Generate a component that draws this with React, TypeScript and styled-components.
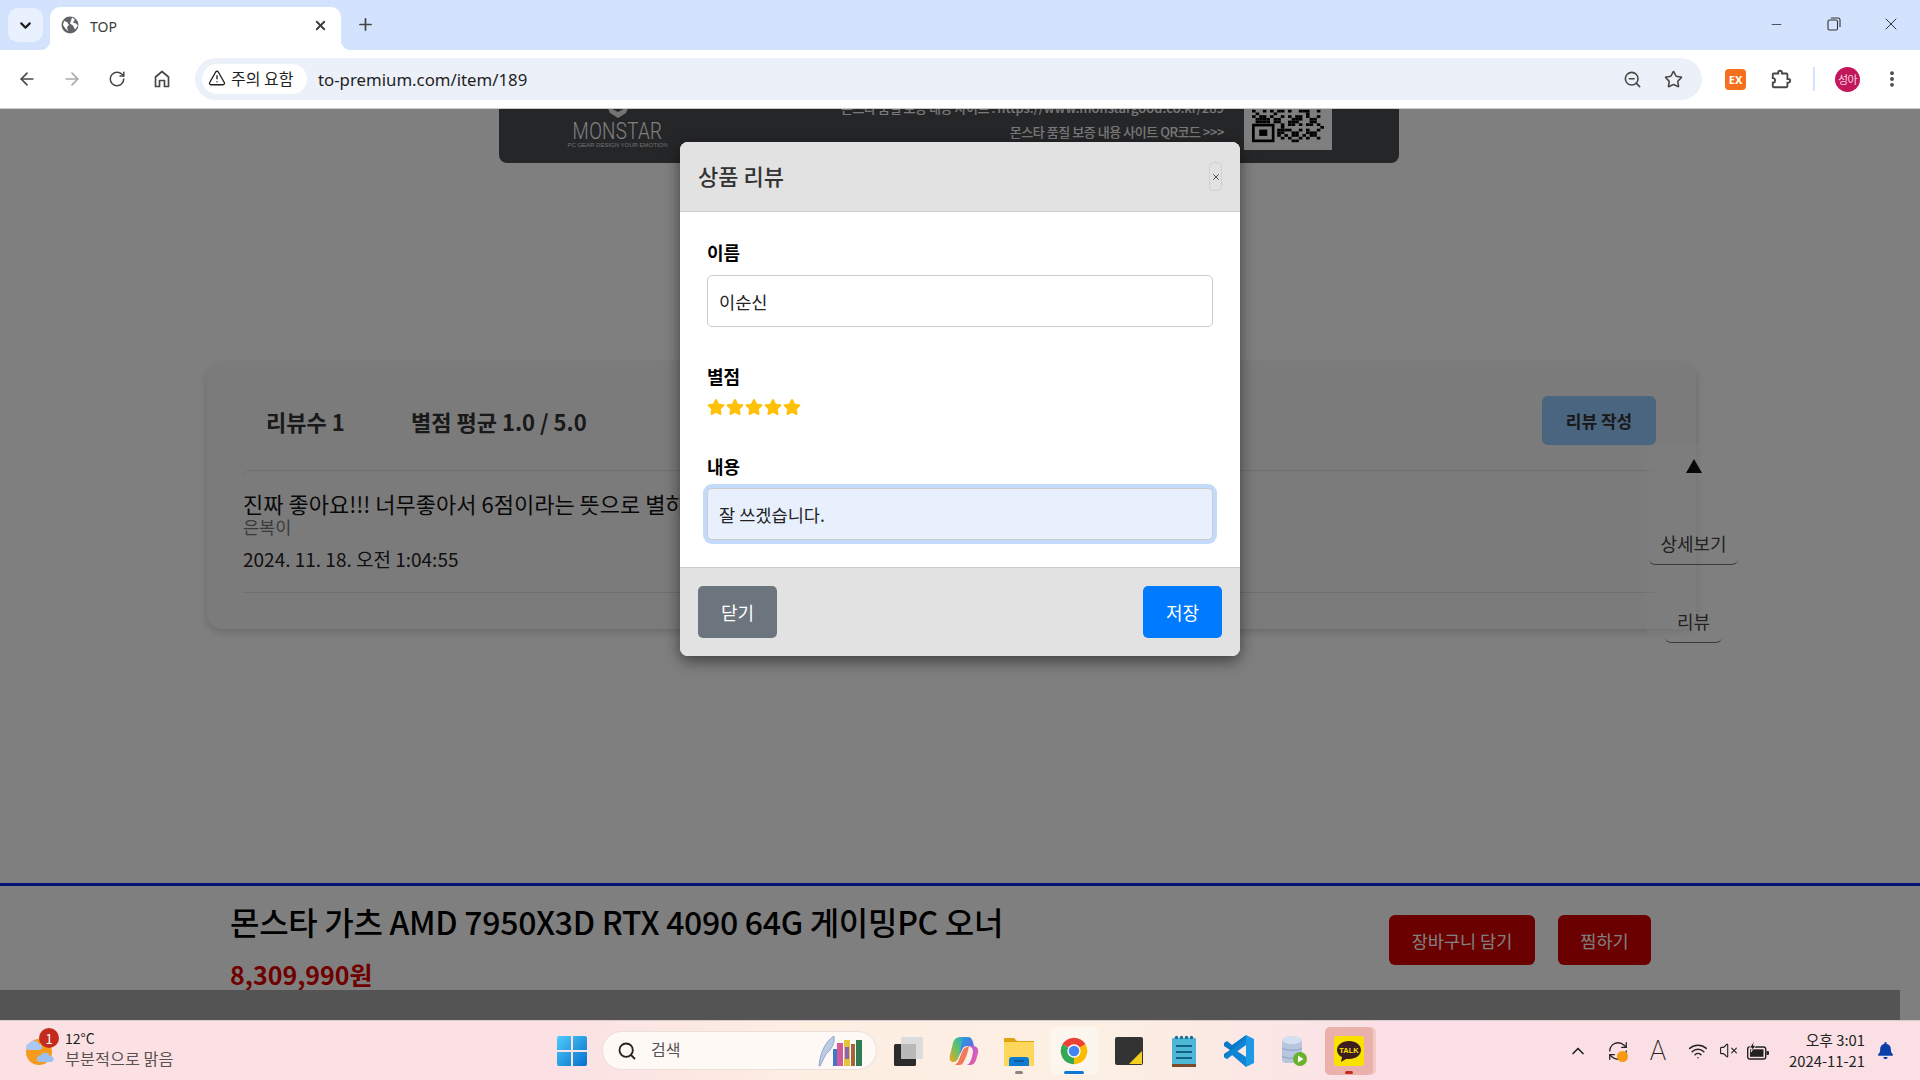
import React from 'react'
import styled, { createGlobalStyle } from 'styled-components'
import {
  ArrowLeft, ArrowRight, ChevronDown, ChevronUp, EllipsisVertical, Minus, Plus,
  RotateCw, Search, Star, TriangleAlert, VolumeX, Wifi, X, ZoomOut, RefreshCw,
} from 'lucide-react'
import { FaStar, FaBell } from 'react-icons/fa'

const GlobalStyle = createGlobalStyle`
  html, body {
    margin: 0;
    height: 1080px;
    overflow: hidden;
    background: #fff;
    font-family: "Noto Sans CJK KR", "Noto Sans", sans-serif;
    color: #212529;
  }
  * { box-sizing: border-box; }
`

const Screen = styled.div`
  width: 1920px;
  height: 1080px;
  display: flex;
  flex-direction: column;
`

/* browser chrome */
const TabStrip = styled.div`
  height: 50px;
  flex: none;
  background: #d3e3fd;
  display: flex;
  align-items: flex-end;
  padding-left: 8px;
`
const TabMenu = styled.div`
  width: 35px;
  height: 34px;
  margin-bottom: 8px;
  margin-right: 7px;
  border-radius: 10px;
  background: #eaf1fe;
  display: flex;
  align-items: center;
  justify-content: center;
  color: #1f1f1f;
`
const Tab = styled.div`
  position: relative;
  width: 291px;
  height: 43px;
  background: #fff;
  border-radius: 10px 10px 0 0;
  display: flex;
  align-items: center;
  padding: 0 13px 7px 11px;
  font-size: 14px;
  color: #3c3c3c;
  &::before, &::after {
    content: '';
    position: absolute;
    bottom: 0;
    width: 10px;
    height: 10px;
  }
  &::before { left: -10px; background: radial-gradient(circle at 0 0, #d3e3fd 10px, #fff 10.5px); }
  &::after { right: -10px; background: radial-gradient(circle at 100% 0, #d3e3fd 10px, #fff 10.5px); }
`
const TabTitle = styled.span`
  flex: 1;
  margin-left: 11px;
  font-family: "Noto Sans", sans-serif;
  font-size: 14px;
  padding-top: 3px;
`
const NewTab = styled.div`
  margin: 0 0 9px 15px;
  height: 34px;
  display: flex;
  align-items: center;
  color: #444;
`
const WindowButtons = styled.div`
  margin-left: auto;
  display: flex;
  align-self: flex-start;
  padding-right: 1px;
`
const WindowButton = styled.div`
  width: 57px;
  height: 48px;
  display: flex;
  align-items: center;
  justify-content: center;
  color: #222;
`
const Toolbar = styled.div`
  height: 59px;
  flex: none;
  background: #fff;
  border-radius: 9px 9px 0 0;
  border-bottom: 1px solid #c9c9c9;
  display: flex;
  align-items: center;
`
const NavButtons = styled.div`
  width: 195px;
  flex: none;
  display: flex;
  padding-left: 5px;
  gap: 1px;
`
const NavButton = styled.div<{ $off?: boolean }>`
  width: 44px;
  height: 32px;
  display: flex;
  align-items: center;
  justify-content: center;
  color: ${p => (p.$off ? '#a9a9a9' : '#474747')};
`
const AddressBar = styled.div`
  width: 1507px;
  height: 42px;
  border-radius: 21px;
  background: #ebf0f9;
  display: flex;
  align-items: center;
  padding: 0 19px 0 7px;
`
const SecurityChip = styled.div`
  width: 105px;
  height: 30px;
  flex: none;
  border-radius: 15px;
  background: #fff;
  display: flex;
  align-items: center;
  gap: 5px;
  padding: 0 0 2px 6px;
  font-size: 16px;
  line-height: 26px;
  white-space: nowrap;
  color: #1f1f1f;
`
const UrlText = styled.span`
  margin-left: 11px;
  flex: 1;
  font-family: "Noto Sans", sans-serif;
  font-size: 16.8px;
  color: #1f1f1f;
`
const AddressIcons = styled.div`
  display: flex;
  gap: 22px;
  color: #474747;
  align-items: center;
`
const ToolIcons = styled.div`
  display: flex;
  align-items: center;
  flex: 1;
  padding-left: 23px;
  color: #474747;
`
const ExBadge = styled.div`
  width: 21px;
  height: 21px;
  border-radius: 4px;
  background: #f5701d;
  color: #fff;
  font-size: 11px;
  font-weight: 700;
  font-family: "Noto Sans", sans-serif;
  display: flex;
  align-items: center;
  justify-content: center;
`
const PuzzleSlot = styled.div`
  margin-left: 24px;
  width: 22px;
  display: flex;
`
const ToolDivider = styled.div`
  width: 2px;
  height: 24px;
  background: #d3e3fd;
  margin-left: 21px;
`
const Avatar = styled.div`
  width: 25px;
  height: 25px;
  margin-left: 20px;
  border-radius: 50%;
  background: #c2185b;
  color: #f7d5e3;
  font-size: 11px;
  letter-spacing: -0.5px;
  display: flex;
  align-items: center;
  justify-content: center;
`
const DotsSlot = styled.div`
  margin-left: 22px;
  display: flex;
  color: #474747;
`

/* page */
const Page = styled.div`
  position: relative;
  flex: 1;
  min-height: 0;
  overflow: hidden;
  display: flex;
  flex-direction: column;
  background: #fff;
`
const Banner = styled.div`
  width: 900px;
  height: 54px;
  flex: none;
  margin-left: 499px;
  background: #4a4c50;
  border-radius: 0 0 8px 8px;
  overflow: hidden;
  display: flex;
  align-items: flex-end;
  padding: 0 67px 13px 72px;
  color: #fff;
`
const BannerLogo = styled.div`
  display: flex;
  flex-direction: column;
  align-items: center;
  width: 93px;
`
const LogoMark = styled.svg`
  display: block;
  margin-bottom: 3px;
`
const LogoName = styled.div`
  font-family: Roboto, "Liberation Sans", sans-serif;
  font-weight: 300;
  font-size: 24px;
  line-height: 20px;
  letter-spacing: 0.4px;
  transform: scaleX(0.78);
  white-space: nowrap;
`
const LogoTag = styled.div`
  font-size: 6px;
  line-height: 9px;
  white-space: nowrap;
  font-family: "Liberation Sans", sans-serif;
  color: #ddd;
`
const BannerCopy = styled.div`
  margin-left: auto;
  margin-right: 20px;
  margin-bottom: 6px;
  text-align: right;
  font-size: 13px;
  font-weight: 500;
  line-height: 24px;
  white-space: nowrap;
  letter-spacing: -0.45px;
  color: #f2f2f2;
`
const BannerUrl = styled.span`
  letter-spacing: 0;
`
const QrBox = styled.div`
  width: 88px;
  height: 46px;
  flex: none;
  background: #fff;
  display: flex;
  align-items: flex-end;
  justify-content: center;
  padding-bottom: 6px;
`
const ReviewCard = styled.section`
  margin: 200px 0 0 207px;
  width: 1489px;
  height: 266px;
  flex: none;
  border-radius: 15px;
  background: #f6f6f6;
  box-shadow: 0 3px 10px rgba(0, 0, 0, 0.18);
  padding: 33px 40px 0 36px;
`
const ReviewHead = styled.div`
  display: flex;
  align-items: center;
  height: 49px;
  padding-left: 23px;
  margin-bottom: 25px;
`
const ReviewStat = styled.div<{ $w: number }>`
  width: ${p => p.$w}px;
  font-size: 22px;
  font-weight: 700;
  color: #333;
`
const WriteButton = styled.button`
  margin-left: auto;
  width: 114px;
  height: 49px;
  border: none;
  border-radius: 6px;
  background: #94cafe;
  color: #333;
  font: 700 17px "Noto Sans CJK KR", sans-serif;
`
const ReviewRow = styled.article`
  height: 123px;
  border-top: 1px solid #dedede;
  border-bottom: 1px solid #dedede;
  border-radius: 8px 8px 0 0;
  padding-top: 18px;
`
const ReviewText = styled.div`
  font-size: 22px;
  line-height: 28px;
  color: #111;
  white-space: nowrap;
`
const ReviewAuthor = styled.div`
  font-size: 17.5px;
  line-height: 20px;
  color: #777;
`
const ReviewDate = styled.div`
  margin-top: 9px;
  font-size: 19px;
  line-height: 26px;
  color: #222;
`
const SideNav = styled.nav`
  position: absolute;
  left: 1647px;
  top: 336px;
  width: 93px;
  height: 220px;
  background: rgba(255, 255, 255, 0.45);
  display: flex;
  flex-direction: column;
  align-items: center;
  font-size: 18px;
  color: #444;
`
const SideArrow = styled.div`
  margin: 14px 0 0;
  width: 0;
  height: 0;
  border-left: 8px solid transparent;
  border-right: 8px solid transparent;
  border-bottom: 14px solid #111;
`
const SideLink = styled.div<{ $w: number; $top: number }>`
  width: ${p => p.$w}px;
  margin-top: ${p => p.$top}px;
  padding-bottom: 7px;
  line-height: 28px;
  text-align: center;
  border-bottom: 1px solid #777;
  border-radius: 0 0 6px 6px;
`
const BuyBar = styled.div`
  margin-top: auto;
  height: 107px;
  flex: none;
  border-top: 3px solid #0a28f0;
  background: #fff;
  display: flex;
  padding: 0 269px 0 230px;
`
const BuyInfo = styled.div`
  flex: 1;
  padding-top: 13px;
`
const BuyTitle = styled.div`
  font-size: 32px;
  line-height: 44px;
  font-weight: 500;
  letter-spacing: -0.3px;
  color: #000;
`
const BuyPrice = styled.div`
  margin-top: 16px;
  font-size: 25px;
  line-height: 30px;
  font-weight: 700;
  color: #e00000;
`
const BuyActions = styled.div`
  display: flex;
  gap: 23px;
  padding-top: 29px;
`
const BuyButton = styled.button<{ $w: number }>`
  width: ${p => p.$w}px;
  height: 50px;
  border: none;
  border-radius: 6px;
  background: #d60000;
  color: #fff;
  font: 400 17.5px "Noto Sans CJK KR", sans-serif;
`
const BottomStrip = styled.div`
  height: 30px;
  flex: none;
  margin-right: 20px;
  background: #a8a8a8;
`

/* modal */
const Backdrop = styled.div`
  position: absolute;
  inset: 0;
  background: rgba(0, 0, 0, 0.5);
  display: flex;
  justify-content: center;
  align-items: flex-start;
  padding-top: 33px;
`
const Modal = styled.div`
  width: 560px;
  height: 514px;
  border-radius: 8px;
  overflow: hidden;
  background: #fff;
  box-shadow: 0 5px 15px rgba(0, 0, 0, 0.5);
  display: flex;
  flex-direction: column;
`
const ModalHead = styled.header`
  height: 70px;
  flex: none;
  background: #e2e2e2;
  border-bottom: 1px solid #ccc;
  display: flex;
  align-items: center;
  justify-content: space-between;
  padding: 0 18px;
`
const ModalTitle = styled.h2`
  margin: -4px 0 0;
  font-size: 22px;
  font-weight: 500;
  color: #333;
`
const CloseButton = styled.button`
  width: 13px;
  height: 29px;
  padding: 0;
  background: transparent;
  border: 1px solid #d0d0d0;
  border-radius: 5px;
  display: flex;
  align-items: center;
  justify-content: center;
  color: #333;
`
const ModalBody = styled.div`
  flex: 1;
  padding: 26px 27px 0;
`
const Field = styled.div<{ $gap: number }>`
  margin-bottom: ${p => p.$gap}px;
`
const FieldLabel = styled.label`
  display: block;
  font-size: 18px;
  font-weight: 700;
  line-height: 28px;
  color: #000;
  margin-bottom: 9px;
`
const StarLabel = styled(FieldLabel)`
  margin-bottom: 6px;
`
const FieldInput = styled.input<{ $focused?: boolean }>`
  display: block;
  width: 506px;
  height: 52px;
  margin-top: ${p => (p.$focused ? '-1px' : '0')};
  padding: 0 11px;
  border: 1px solid #ccc;
  border-radius: 5px;
  outline: none;
  font: 400 17.6px "Noto Sans CJK KR", sans-serif;
  color: #222;
  background: ${p => (p.$focused ? '#e8f0fe' : '#fff')};
  box-shadow: ${p => (p.$focused ? '0 0 0 4px #c4dafa' : 'none')};
`
const StarRow = styled.div`
  display: flex;
  gap: 1px;
  color: #ffc107;
  height: 22px;
  align-items: center;
`
const ModalFoot = styled.footer`
  height: 89px;
  flex: none;
  background: #e2e2e2;
  border-top: 1px solid #ccc;
  display: flex;
  justify-content: space-between;
  padding: 18px 18px 0;
`
const ModalButton = styled.button<{ $tone: string }>`
  width: 79px;
  height: 52px;
  border: none;
  border-radius: 5px;
  background: ${p => p.$tone};
  color: #fff;
  font: 400 18px "Noto Sans CJK KR", sans-serif;
`

/* taskbar */
const Taskbar = styled.footer`
  height: 60px;
  flex: none;
  border-top: 1px solid #d9cccc;
  background: linear-gradient(90deg, #fbe0e4 0%, #fbe0e4 28%, #fdeee2 42%, #fcefe3 58%, #fae0e6 72%, #fae0e4 100%);
  display: flex;
  align-items: center;
  z-index: 2;
`
const Weather = styled.div`
  width: 557px;
  flex: none;
  display: flex;
  align-items: center;
  padding-left: 24px;
`
const WeatherIcon = styled.div`
  position: relative;
  width: 34px;
  height: 40px;
  margin-top: -3px;
  display: flex;
  align-items: center;
`
const WeatherBadge = styled.span`
  position: absolute;
  top: -1px;
  left: 15px;
  width: 20px;
  height: 20px;
  border-radius: 50%;
  background: #c42b1c;
  color: #fff;
  font-size: 13px;
  display: flex;
  align-items: center;
  justify-content: center;
`
const WeatherText = styled.div`
  margin: -5px 0 0 7px;
  font-size: 14px;
  line-height: 20px;
  color: #1c1c1c;
`
const WeatherSub = styled.div`
  font-size: 16.3px;
  color: #5a5252;
`
const StartLogo = styled.div`
  width: 31px;
  display: flex;
  margin-right: 14px;
`
const SearchBox = styled.div`
  width: 275px;
  height: 39px;
  flex: none;
  border-radius: 20px;
  background: #fff9f6;
  border: 1px solid #eadfda;
  display: flex;
  align-items: center;
  padding: 0 12px 0 14px;
  font-size: 16px;
  color: #555;
  margin-right: 4px;
`
const SearchHint = styled.span`
  margin: -3px 0 0 14px;
  flex: 1;
`
const TaskButton = styled.div<{ $state?: 'open' | 'active' | 'alert' }>`
  position: relative;
  width: 48px;
  height: 48px;
  margin: 0 3.5px;
  flex: none;
  border-radius: 5px;
  display: flex;
  align-items: center;
  justify-content: center;
  background: ${p => (p.$state === 'active' ? '#fdf6ef' : p.$state === 'alert' ? '#eab0ab' : 'transparent')};
  box-shadow: ${p => (p.$state === 'alert' ? '3px 0 0 #f3c9c5' : 'none')};
  &::after {
    content: '';
    display: ${p => (p.$state ? 'block' : 'none')};
    position: absolute;
    bottom: 1px;
    left: 50%;
    height: 3px;
    border-radius: 2px;
    transform: translateX(-50%);
    width: ${p => (p.$state === 'active' ? '20px' : '8px')};
    background: ${p => (p.$state === 'active' ? '#0a78d4' : p.$state === 'alert' ? '#c42b1c' : '#8a8580')};
  }
`
const Tray = styled.div`
  margin-left: auto;
  display: flex;
  align-items: center;
  padding-right: 25px;
  color: #222;
`
const TrayItem = styled.div<{ $w: number; $after?: number }>`
  position: relative;
  width: ${p => p.$w}px;
  margin-right: ${p => p.$after ?? 0}px;
  display: flex;
  justify-content: center;
  align-items: center;
`
const TrayLetter = styled.span`
  font-family: Roboto, "Liberation Sans", sans-serif;
  font-size: 27px;
  font-weight: 200;
  color: #222;
`
const SyncDot = styled.span`
  position: absolute;
  right: 10px;
  bottom: 0;
  width: 11px;
  height: 11px;
  border-radius: 50%;
  background: #f79a0f;
`
const Clock = styled.div`
  width: 82px;
  margin: -2px 0 0 10px;
  text-align: right;
  font-size: 14.8px;
  line-height: 21px;
  white-space: nowrap;
`
const BellSlot = styled.div`
  width: 20px;
  margin-left: 10px;
  display: flex;
  justify-content: center;
  color: #0b3fa8;
`

function Globe() {
  return (
    <svg width="18" height="18" viewBox="0 0 18 18">
      <circle cx="9" cy="9" r="8.5" fill="#5f6368" />
      <path d="M3 5l3 1 2 3-2 2 1 4-3-3-2-3zM11 1.500l3 2-2 3 3 1 2 2-3 4-2-4-3-2 1-3z" fill="#fff" />
    </svg>
  )
}

function HomeIcon() {
  return (
    <svg width="20" height="20" viewBox="0 0 20 20" fill="none" stroke="#474747" strokeWidth="1.700" strokeLinejoin="round">
      <path d="M3.500 17.500V8L10 2.500 16.500 8v9.500h-4v-6h-5v6z" />
    </svg>
  )
}

function PuzzleIcon() {
  return (
    <svg width="22" height="22" viewBox="0 0 24 24" fill="none" stroke="#474747" strokeWidth="2">
      <path d="M4 6h5V5a2 2 0 0 1 4 0v1h5a1 1 0 0 1 1 1v5h1a2 2 0 0 1 0 4h-1v4a1 1 0 0 1-1 1H4a1 1 0 0 1-1-1v-4a2.500 2.500 0 0 0 0-5V7a1 1 0 0 1 1-1z" />
    </svg>
  )
}

function BatteryIcon() {
  return (
    <svg width="24" height="20" viewBox="0 0 24 20">
      <rect x="1.700" y="6" width="18" height="12" rx="2" fill="none" stroke="#222" strokeWidth="1.400" />
      <rect x="4" y="8.300" width="13.500" height="7.500" fill="#222" />
      <rect x="20.500" y="10" width="2.500" height="4" rx="1" fill="#222" />
      <path d="M8 0L3.500 7h2.500l-1 4 5-6.500H7.500z" fill="#222" stroke="#fbe0e4" strokeWidth="0.800" />
    </svg>
  )
}

function QrCode() {
  const cells: React.ReactNode[] = []
  const size = 20
  for (let y = 0; y < 12; y++) {
    for (let x = 0; x < size; x++) {
      const inFinder = x < 7 && y > 4
      if (!inFinder && ((x * 7 + y * 13 + x * y * 3) % 5 < 2 || (x ^ y) % 7 === 0)) {
        cells.push(<rect key={`${x}-${y}`} x={x * 4} y={y * 3} width="4" height="3" fill="#000" />)
      }
    }
  }
  return (
    <svg width="72" height="36" viewBox="0 0 80 36">
      {cells}
      <rect x="1.500" y="17" width="22" height="17.500" fill="none" stroke="#000" strokeWidth="3" />
      <rect x="8" y="22" width="9" height="7" fill="#000" />
    </svg>
  )
}

function WeatherArt() {
  return (
    <svg width="34" height="36" viewBox="0 0 34 36">
      <circle cx="15" cy="21" r="13" fill="#f59a1c" />
      <path d="M2 17a4 4 0 0 1 4-5 5 5 0 0 1 9 1 3 3 0 0 1 0 6H4a2 2 0 0 1-2-2z" fill="#a9c8f5" />
      <path d="M13 29a4 4 0 0 1 4-5 5 5 0 0 1 9 1 3 3 0 0 1 1 6H15a2 2 0 0 1-2-2z" fill="#9cc0f2" />
    </svg>
  )
}

function WindowsLogo() {
  return (
    <svg width="30" height="30" viewBox="0 0 30 30">
      <defs>
        <linearGradient id="win" x1="0" y1="0" x2="1" y2="1">
          <stop offset="0" stopColor="#4fcbfb" />
          <stop offset="1" stopColor="#0570cc" />
        </linearGradient>
      </defs>
      <path d="M0 2a2 2 0 0 1 2-2h12v14H0zM16 0h12a2 2 0 0 1 2 2v12H16zM0 16h14v14H2a2 2 0 0 1-2-2zM16 16h14v12a2 2 0 0 1-2 2H16z" fill="url(#win)" />
    </svg>
  )
}

function BooksArt() {
  return (
    <svg width="46" height="32" viewBox="0 0 46 32">
      <path d="M1 31C2 17 8 6 16 1c1 7-2 13-8 18-2 4-4 8-6 12z" fill="#b8cde6" stroke="#7d8cb8" strokeWidth="0.7" />
      <rect x="15" y="14" width="4" height="17" fill="#3f78c6" />
      <rect x="19" y="8" width="6" height="23" fill="#d05a9c" />
      <rect x="26" y="5" width="6" height="26" fill="#e4c43a" />
      <rect x="27" y="12" width="4" height="12" fill="#8b63c8" />
      <rect x="33" y="9" width="4" height="22" fill="#a6643a" />
      <rect x="38" y="5" width="6" height="26" fill="#2e7d55" />
    </svg>
  )
}

function TaskViewArt() {
  return (
    <svg width="30" height="30" viewBox="0 0 30 30">
      <rect x="0" y="8" width="22" height="22" rx="1.500" fill="#2b2b2b" />
      <rect x="7" y="1" width="22" height="22" rx="1.500" fill="#dcdcdc" />
      <rect x="7" y="8" width="15" height="15" fill="#b9b9b9" />
    </svg>
  )
}

function CopilotArt() {
  return (
    <svg width="32" height="32" viewBox="0 0 32 32">
      <defs>
        <linearGradient id="cpa" x1="0" y1="0" x2="1" y2="1">
          <stop offset="0" stopColor="#1fa5e0" />
          <stop offset="1" stopColor="#6a5be0" />
        </linearGradient>
        <linearGradient id="cpb" x1="0" y1="0" x2="1" y2="1">
          <stop offset="0" stopColor="#a95be8" />
          <stop offset="1" stopColor="#f0609a" />
        </linearGradient>
        <linearGradient id="cpc" x1="0" y1="1" x2="1" y2="0">
          <stop offset="0" stopColor="#f6a21c" />
          <stop offset="0.5" stopColor="#5fc46a" />
          <stop offset="1" stopColor="#1fa5e0" />
        </linearGradient>
      </defs>
      <path d="M13 2h5c-2 1-3 3-4 7l-3 12c-1 4-3 6-6 6-3 0-4-3-3-7l3-12c1-4 4-6 8-6z" fill="url(#cpc)" />
      <path d="M13 2h7c3 0 4 2 5 5l1 4h-7c-2 0-4 1-5 4l-3 6 2-10c1-5 1-8 0-9z" fill="url(#cpa)" />
      <path d="M21 11h4c4 0 6 3 5 7l-2 7c-1 3-3 5-6 5h-3c2-1 4-4 5-8l1-5c0-3-1-5-4-6z" fill="url(#cpb)" />
      <path d="M10 27l4-10c1-3 3-5 7-6-1 6-3 12-6 17-1 2-3 2-5 2h-3c1-1 2-2 3-3z" fill="#f26b4b" opacity="0.9" />
    </svg>
  )
}

function FolderArt() {
  return (
    <svg width="32" height="32" viewBox="0 0 32 32">
      <path d="M1 3h10l3 3h17v8H1z" fill="#dea30e" />
      <rect x="1" y="7" width="30" height="24" fill="#fbd75b" />
      <path d="M6 31v-6a3 3 0 0 1 3-3h14a3 3 0 0 1 3 3v6z" fill="#0f7ad1" />
      <rect x="11" y="25" width="10" height="2" fill="#0b5aa0" />
    </svg>
  )
}

function ChromeArt() {
  return (
    <svg width="32" height="32" viewBox="0 0 48 48">
      <path d="M24 24L6.680 14A20 20 0 0 1 41.320 14z" fill="#ea4335" />
      <path d="M24 24L24 44A20 20 0 0 1 6.680 14z" fill="#34a853" />
      <path d="M24 24L41.320 14A20 20 0 0 1 24 44z" fill="#fbbc04" />
      <circle cx="24" cy="24" r="10" fill="#fff" />
      <circle cx="24" cy="24" r="8" fill="#4285f4" />
    </svg>
  )
}

function StickyArt() {
  return (
    <svg width="28" height="28" viewBox="0 0 28 28">
      <rect width="28" height="28" rx="2" fill="#333" />
      <path d="M14 27L27 14v13z" fill="#f6cf1d" />
    </svg>
  )
}

function NotepadArt() {
  return (
    <svg width="24" height="32" viewBox="0 0 24 32">
      <rect y="3" width="24" height="28" rx="1" fill="#4fb6d8" />
      <rect y="29" width="24" height="3" fill="#7a4a2a" />
      {[3, 8, 13, 18].map(x => <circle key={x} cx={x + 1.5} cy="2.500" r="1.700" fill="#1b6f90" />)}
      {[10, 16, 22].map(y => <rect key={y} x="4" y={y} width="16" height="2" fill="#0f6484" />)}
    </svg>
  )
}

function VsCodeArt() {
  return (
    <svg width="32" height="34" viewBox="0 0 32 34">
      <path d="M23 1L31 5v24l-8 4z" fill="#1c9ae6" />
      <path d="M23 1v9L9 21l-5 4-3-2v-3l6-4-6-4v-3l3-2 5 4z" fill="#0a78c8" />
      <path d="M4 25l-3-2 22-20v8L9 21zM23 23v10L9 21l5-4z" fill="#0f84d4" />
    </svg>
  )
}

function DiskArt() {
  return (
    <svg width="28" height="32" viewBox="0 0 28 32">
      <rect x="2" y="3" width="20" height="25" rx="4" fill="#b7c5de" />
      <ellipse cx="12" cy="5" rx="10" ry="4" fill="#d6dfef" />
      <path d="M2 13c3 3 17 3 20 0M2 21c3 3 17 3 20 0" stroke="#8da0c4" fill="none" />
      <circle cx="20" cy="24" r="7" fill="#68b32e" />
      <path d="M18 20.500l5.500 3.500-5.500 3.500z" fill="#fff" />
    </svg>
  )
}

function KakaoArt() {
  return (
    <svg width="30" height="30" viewBox="0 0 30 30">
      <rect width="30" height="30" rx="3" fill="#fae100" />
      <path d="M15 5c-7 0-12 4-12 9 0 3 2 6 5 7l-1 5 5-3h3c7 0 12-4 12-9s-5-9-12-9z" fill="#3c1e1e" />
      <text x="15" y="17" textAnchor="middle" fontFamily="Liberation Sans, sans-serif" fontSize="7.500" fontWeight="700" fill="#fae100">TALK</text>
    </svg>
  )
}

export default function App() {
  return (
    <Screen>
      <GlobalStyle />
      <TabStrip>
        <TabMenu><ChevronDown size={17} strokeWidth={3} /></TabMenu>
        <Tab>
          <Globe />
          <TabTitle>TOP</TabTitle>
          <X size={15} strokeWidth={3} />
        </Tab>
        <NewTab><Plus size={19} strokeWidth={2.2} /></NewTab>
        <WindowButtons>
          <WindowButton><Minus size={15} strokeWidth={1.2} /></WindowButton>
          <WindowButton>
            <svg width="14" height="14" viewBox="0 0 14 14" fill="none" stroke="#333" strokeWidth="1.1">
              <rect x="1" y="3" width="9.500" height="10" rx="1.500" />
              <path d="M4 1h7a2 2 0 0 1 2 2v7" />
            </svg>
          </WindowButton>
          <WindowButton><X size={20} strokeWidth={1.1} /></WindowButton>
        </WindowButtons>
      </TabStrip>

      <Toolbar>
        <NavButtons>
          <NavButton><ArrowLeft size={20} /></NavButton>
          <NavButton $off><ArrowRight size={20} /></NavButton>
          <NavButton><RotateCw size={18} /></NavButton>
          <NavButton><HomeIcon /></NavButton>
        </NavButtons>
        <AddressBar>
          <SecurityChip>
            <TriangleAlert size={18} strokeWidth={1.8} />
            주의 요함
          </SecurityChip>
          <UrlText>to-premium.com/item/189</UrlText>
          <AddressIcons>
            <ZoomOut size={19} />
            <Star size={19} />
          </AddressIcons>
        </AddressBar>
        <ToolIcons>
          <ExBadge>EX</ExBadge>
          <PuzzleSlot><PuzzleIcon /></PuzzleSlot>
          <ToolDivider />
          <Avatar>성아</Avatar>
          <DotsSlot><EllipsisVertical size={20} strokeWidth={2.6} /></DotsSlot>
        </ToolIcons>
      </Toolbar>

      <Page>
        <Banner>
          <BannerLogo>
            <LogoMark width="30" height="14" viewBox="0 0 30 14">
              <path d="M4 2l11 6 11-6-3 7-8 5-8-5z" fill="#e8e8e8" />
            </LogoMark>
            <LogoName>MONSTAR</LogoName>
            <LogoTag>PC GEAR DESIGN YOUR EMOTION</LogoTag>
          </BannerLogo>
          <BannerCopy>
            몬스타 품질 보증 내용 사이트 : <BannerUrl>https://www.monstargood.co.kr/289</BannerUrl>
            <br />
            몬스타 품질 보증 내용 사이트 QR코드 &gt;&gt;&gt;
          </BannerCopy>
          <QrBox><QrCode /></QrBox>
        </Banner>

        <ReviewCard>
          <ReviewHead>
            <ReviewStat $w={145}>리뷰수 1</ReviewStat>
            <ReviewStat $w={300}>별점 평균 1.0 / 5.0</ReviewStat>
            <WriteButton>리뷰 작성</WriteButton>
          </ReviewHead>
          <ReviewRow>
            <ReviewText>진짜 좋아요!!! 너무좋아서 6점이라는 뜻으로 별하나 줍니다</ReviewText>
            <ReviewAuthor>은복이</ReviewAuthor>
            <ReviewDate>2024. 11. 18. 오전 1:04:55</ReviewDate>
          </ReviewRow>
        </ReviewCard>

        <SideNav>
          <SideArrow />
          <SideLink $w={89} $top={56}>상세보기</SideLink>
          <SideLink $w={57} $top={42}>리뷰</SideLink>
        </SideNav>

        <BuyBar>
          <BuyInfo>
            <BuyTitle>몬스타 가츠 AMD 7950X3D RTX 4090 64G 게이밍PC 오너</BuyTitle>
            <BuyPrice>8,309,990원</BuyPrice>
          </BuyInfo>
          <BuyActions>
            <BuyButton $w={146}>장바구니 담기</BuyButton>
            <BuyButton $w={93}>찜하기</BuyButton>
          </BuyActions>
        </BuyBar>
        <BottomStrip />

        <Backdrop>
          <Modal>
            <ModalHead>
              <ModalTitle>상품 리뷰</ModalTitle>
              <CloseButton><X size={10} strokeWidth={2} /></CloseButton>
            </ModalHead>
            <ModalBody>
              <Field $gap={35}>
                <FieldLabel>이름</FieldLabel>
                <FieldInput readOnly value="이순신" />
              </Field>
              <Field $gap={34}>
                <StarLabel>별점</StarLabel>
                <StarRow>
                  {[0, 1, 2, 3, 4].map(i => <FaStar key={i} size={18} />)}
                </StarRow>
              </Field>
              <Field $gap={0}>
                <FieldLabel>내용</FieldLabel>
                <FieldInput readOnly $focused value="잘 쓰겠습니다." />
              </Field>
            </ModalBody>
            <ModalFoot>
              <ModalButton $tone="#6c757d">닫기</ModalButton>
              <ModalButton $tone="#007bff">저장</ModalButton>
            </ModalFoot>
          </Modal>
        </Backdrop>
      </Page>

      <Taskbar>
        <Weather>
          <WeatherIcon>
            <WeatherArt />
            <WeatherBadge>1</WeatherBadge>
          </WeatherIcon>
          <WeatherText>
            12°C
            <WeatherSub>부분적으로 맑음</WeatherSub>
          </WeatherText>
        </Weather>
        <StartLogo><WindowsLogo /></StartLogo>
        <SearchBox>
          <Search size={20} color="#222" strokeWidth={2.2} />
          <SearchHint>검색</SearchHint>
          <BooksArt />
        </SearchBox>
        <TaskButton><TaskViewArt /></TaskButton>
        <TaskButton><CopilotArt /></TaskButton>
        <TaskButton $state="open"><FolderArt /></TaskButton>
        <TaskButton $state="active"><ChromeArt /></TaskButton>
        <TaskButton><StickyArt /></TaskButton>
        <TaskButton><NotepadArt /></TaskButton>
        <TaskButton><VsCodeArt /></TaskButton>
        <TaskButton><DiskArt /></TaskButton>
        <TaskButton $state="alert"><KakaoArt /></TaskButton>
        <Tray>
          <TrayItem $w={40}><ChevronUp size={20} strokeWidth={2} /></TrayItem>
          <TrayItem $w={40}><RefreshCw size={22} strokeWidth={1.4} /><SyncDot /></TrayItem>
          <TrayItem $w={40} $after={5}><TrayLetter>A</TrayLetter></TrayItem>
          <TrayItem $w={30}><Wifi size={20} strokeWidth={1.8} /></TrayItem>
          <TrayItem $w={30}><VolumeX size={19} strokeWidth={1.4} /></TrayItem>
          <TrayItem $w={30}><BatteryIcon /></TrayItem>
          <Clock>오후 3:01<br />2024-11-21</Clock>
          <BellSlot><FaBell size={17} /></BellSlot>
        </Tray>
      </Taskbar>
    </Screen>
  )
}
